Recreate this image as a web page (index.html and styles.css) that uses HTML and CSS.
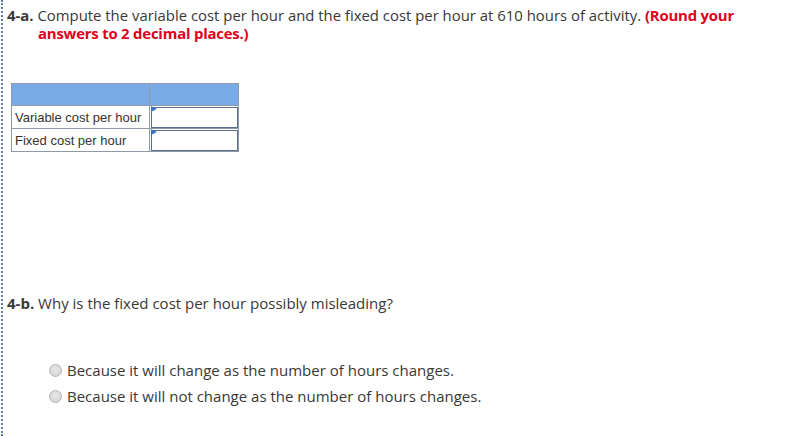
FILE: index.html
```html
<!DOCTYPE html>
<html>
<head>
<meta charset="utf-8">
<link rel="stylesheet" href="styles.css">
</head>
<body>
<div class="frame">
  <p class="question q1"><b>4-a.</b> Compute the variable cost per hour and the fixed cost per hour at 610 hours of activity. <span class="note">(Round your answers to 2 decimal places.)</span></p>
  <table class="grid">
    <tr class="head"><td class="label"></td><td class="val"></td></tr>
    <tr><td class="label">Variable cost per hour</td><td class="val"><div class="input"></div></td></tr>
    <tr><td class="label">Fixed cost per hour</td><td class="val"><div class="input"></div></td></tr>
  </table>
  <p class="question q2"><b>4-b.</b> Why is the fixed cost per hour possibly misleading?</p>
  <div class="options">
    <div class="option"><span class="radio"></span>Because it will change as the number of hours changes.</div>
    <div class="option"><span class="radio"></span>Because it will not change as the number of hours changes.</div>
  </div>
</div>
</body>
</html>
```
FILE: styles.css
```css
html, body { margin: 0; padding: 0; background: #fff; }
body { font-family: "Open Sans", "Lato", sans-serif; color: #383838; }
.frame {
  margin-left: 1px;
  border-left: 2px dotted #5b7ea6;
  min-height: 436px;
  padding-left: 4px;
  padding-top: 6px;
  box-sizing: border-box;
}
.question {
  margin: 0;
  font-size: 15px;
  line-height: 18px;
  padding-left: 31px;
  text-indent: -31px;
}
.q1 { max-width: 735px; box-sizing: border-box; font-size: 14.9px; }
.question b { font-weight: 700; }
.note { color: #e0001b; font-weight: 700; letter-spacing: -0.2px; }
.grid {
  margin-top: 41px;
  margin-left: 4px;
  border-collapse: collapse;
  font-family: "Liberation Sans", Arial, sans-serif;
  font-size: 13px;
  color: #333;
}
.grid td { border: 1px solid #8e9aa6; padding: 0; height: 22px; }
.grid .head td { background: #79abe6; height: 21px; }
.grid .label { width: 134px; padding-left: 3px; }
.grid .val { width: 88px; position: relative; padding: 0; }
.input {
  height: 21px;
  border: 1px solid #56708e;
  box-sizing: border-box;
  margin: 0 0 0 1px;
  background: #fff;
}
.val .input::before {
  content: "";
  position: absolute;
  left: 1px; top: 0;
  border-left: 6px solid #3b75c4;
  border-top: 3px solid transparent;
  border-bottom: 3px solid transparent;
}
.q2 { margin-top: 142px; }
.options { margin-top: 45px; padding-left: 42px; }
.option {
  display: flex;
  align-items: center;
  font-size: 15px;
  line-height: 26px;
  gap: 5px;
}
.radio {
  width: 13px; height: 13px;
  border-radius: 50%;
  border: 1px solid #b5b5b5;
  background: radial-gradient(circle at 50% 40%, #e8e8e8, #cfcfcf);
  box-sizing: border-box;
}
```
